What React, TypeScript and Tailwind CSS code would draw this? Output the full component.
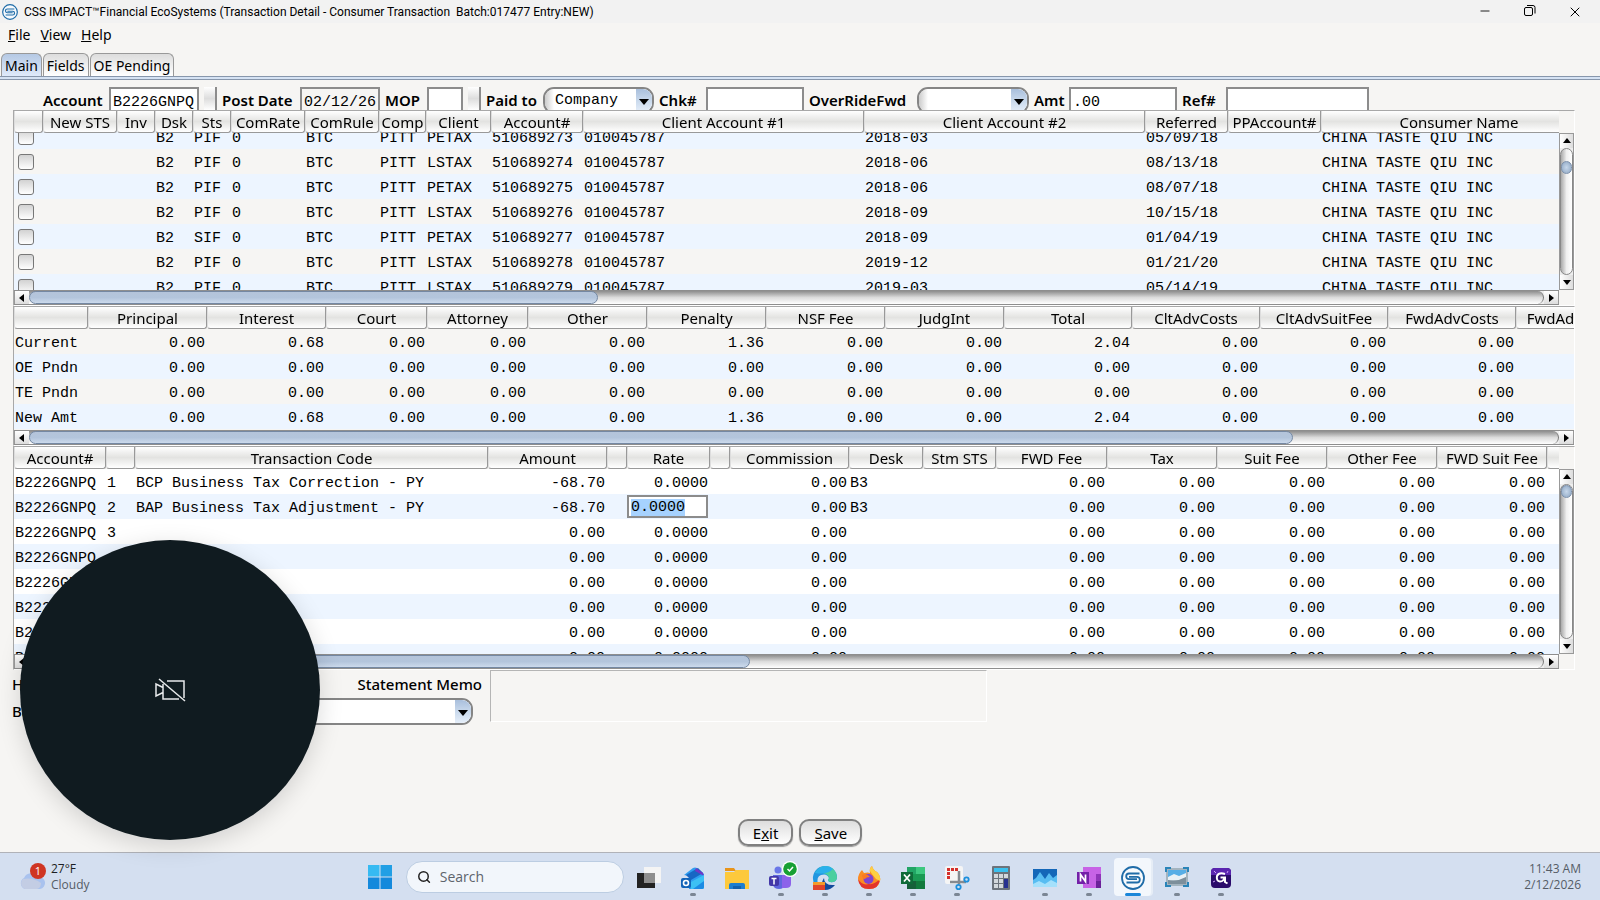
import React, { useEffect, useRef } from 'react'
import { Minus, Search, X } from 'lucide-react'

interface Column {
  name: string
  width: number
  align?: 'left' | 'right'
}

const accountColumns: Column[] = [
  { name: '', width: 29 },
  { name: 'New STS', width: 74 },
  { name: 'Inv', width: 38 },
  { name: 'Dsk', width: 38 },
  { name: 'Sts', width: 38 },
  { name: 'ComRate', width: 74 },
  { name: 'ComRule', width: 74 },
  { name: 'Comp', width: 47 },
  { name: 'Client', width: 65 },
  { name: 'Account#', width: 92 },
  { name: 'Client Account #1', width: 281 },
  { name: 'Client Account #2', width: 281 },
  { name: 'Referred', width: 83 },
  { name: 'PPAccount#', width: 93 },
  { name: 'Consumer Name', width: 276 },
]

const accounts = [
  { sts: 'PIF', client: 'PETAX', account: '510689273', period: '2018-03', referred: '05/09/18' },
  { sts: 'PIF', client: 'LSTAX', account: '510689274', period: '2018-06', referred: '08/13/18' },
  { sts: 'PIF', client: 'PETAX', account: '510689275', period: '2018-06', referred: '08/07/18' },
  { sts: 'PIF', client: 'LSTAX', account: '510689276', period: '2018-09', referred: '10/15/18' },
  { sts: 'SIF', client: 'PETAX', account: '510689277', period: '2018-09', referred: '01/04/19' },
  { sts: 'PIF', client: 'LSTAX', account: '510689278', period: '2019-12', referred: '01/21/20' },
  { sts: 'PIF', client: 'LSTAX', account: '510689279', period: '2019-03', referred: '05/14/19' },
]

const balanceColumns: Column[] = [
  { name: '', width: 74 },
  { name: 'Principal', width: 119, align: 'right' },
  { name: 'Interest', width: 119, align: 'right' },
  { name: 'Court', width: 101, align: 'right' },
  { name: 'Attorney', width: 101, align: 'right' },
  { name: 'Other', width: 119, align: 'right' },
  { name: 'Penalty', width: 119, align: 'right' },
  { name: 'NSF Fee', width: 119, align: 'right' },
  { name: 'JudgInt', width: 119, align: 'right' },
  { name: 'Total', width: 128, align: 'right' },
  { name: 'CltAdvCosts', width: 128, align: 'right' },
  { name: 'CltAdvSuitFee', width: 128, align: 'right' },
  { name: 'FwdAdvCosts', width: 128, align: 'right' },
  { name: 'FwdAdvSuitFee', width: 128, align: 'right' },
]

const zero = '0.00'
const dueAmounts = [zero, '0.68', zero, zero, zero, '1.36', zero, zero, '2.04', zero, zero, zero, zero]
const noAmounts = dueAmounts.map(() => zero)

const balances = [
  ['Current', ...dueAmounts],
  ['OE Pndn', ...noAmounts],
  ['TE Pndn', ...noAmounts],
  ['New Amt', ...dueAmounts],
]

const transactionColumns: Column[] = [
  { name: 'Account#', width: 92 },
  { name: '', width: 29 },
  { name: 'Transaction Code', width: 353 },
  { name: 'Amount', width: 119, align: 'right' },
  { name: '', width: 20 },
  { name: 'Rate', width: 83, align: 'right' },
  { name: '', width: 20 },
  { name: 'Commission', width: 119, align: 'right' },
  { name: 'Desk', width: 74 },
  { name: 'Stm STS', width: 73 },
  { name: 'FWD Fee', width: 111, align: 'right' },
  { name: 'Tax', width: 110, align: 'right' },
  { name: 'Suit Fee', width: 110, align: 'right' },
  { name: 'Other Fee', width: 110, align: 'right' },
  { name: 'FWD Suit Fee', width: 110, align: 'right' },
  { name: '', width: 110, align: 'right' },
]

const codes = ['BCP Business Tax Correction - PY', 'BAP Business Tax Adjustment - PY']

// Rate field that is being edited, its value selected on open
const RateEditor: React.FC = () => {
  const ref = useRef<HTMLInputElement>(null)
  useEffect(() => {
    ref.current?.focus({ preventScroll: true })
    ref.current?.select()
  }, [])
  return (
    <input
      ref={ref}
      aria-label="Rate"
      defaultValue="0.0000"
      className="block h-[23px] w-full border-2 border-[#8c8c8c] bg-white pt-[2px] pl-[2px] text-left outline-none selection:bg-[#a6d2ff] selection:text-black"
    />
  )
}

const accountRows: React.ReactNode[][] = accounts.map(a => [
  <input
    type="checkbox"
    aria-label={`Select ${a.account}`}
    className="ml-[3px] block size-4 appearance-none rounded-[3px] border border-[#777] bg-linear-to-b from-[#d2d2d2] to-white"
  />,
  '', '', 'B2', a.sts, '0', 'BTC', 'PITT', a.client, a.account, '010045787', a.period, a.referred, '', 'CHINA TASTE QIU INC',
])

const transactionRows: React.ReactNode[][] = Array.from({ length: 8 }, (_, i) => {
  const coded = i < codes.length
  return [
    'B2226GNPQ', String(i + 1), codes[i] ?? '', coded ? '-68.70' : zero, '',
    i === 1 ? <RateEditor /> : '0.0000',
    '', zero, coded ? 'B3' : '', '', zero, zero, zero, zero, zero, '',
  ]
})

const Arrow: React.FC<{ d: string }> = ({ d }) => (
  <svg viewBox="0 0 10 10" className="size-[10px]"><path d={d} fill="#000" /></svg>
)

const HScroll: React.FC<{ thumb: number }> = ({ thumb }) => (
  <div className="flex h-[15px] border-y border-[#8e8e8e] bg-[#eee]">
    <button aria-label="Scroll left" className="flex w-[15px] items-center justify-center border-l border-[#999] bg-linear-to-b from-white to-[#ddd]">
      <Arrow d="M7 1v8L2 5z" />
    </button>
    <div className="flex-1 rounded-r-full border-r border-[#777] bg-linear-to-b from-[#8d8d8d] via-[#dcdcdc] to-white">
      <div
        className="h-full rounded-full border border-[#7488a3] bg-linear-to-b from-[#b4c4da] via-[#b3c5dc] to-[#ccdaec]"
        style={{ width: `${thumb}%` }}
      />
    </div>
    <button aria-label="Scroll right" className="flex w-[15px] items-center justify-center border-r border-[#999] bg-linear-to-b from-white to-[#ddd]">
      <Arrow d="M3 1v8l5-4z" />
    </button>
  </div>
)

const VScroll: React.FC<{ start: number }> = ({ start }) => (
  <div className="flex w-[15px] flex-1 flex-col border border-[#999] bg-[#eee]">
    <button aria-label="Scroll up" className="flex h-[14px] items-center justify-center bg-linear-to-r from-white to-[#ddd]">
      <Arrow d="M1 7h8L5 2z" />
    </button>
    <div className="flex-1 rounded-full border border-[#888] bg-linear-to-r from-[#aaa] via-[#efefef] to-white">
      <div style={{ height: start }} />
      <div className="h-[13px] w-full rounded-full border border-[#7c90ab] bg-radial from-[#c6d7ea] to-[#8ea6c2]" />
    </div>
    <button aria-label="Scroll down" className="flex h-[14px] items-center justify-center bg-linear-to-r from-white to-[#ddd]">
      <Arrow d="M1 3h8L5 8z" />
    </button>
  </div>
)

interface GridProps {
  label: string
  columns: Column[]
  rows: React.ReactNode[][]
  height: string
  odd: string
  even: string
  thumb: number
  scrollTop?: number
  vStart?: number
}

const Grid: React.FC<GridProps> = ({ label, columns, rows, height, odd, even, thumb, scrollTop = 0, vStart }) => {
  const view = useRef<HTMLDivElement>(null)
  useEffect(() => {
    if (view.current) view.current.scrollTop = scrollTop
  }, [scrollTop])
  const total = columns.reduce((sum, c) => sum + c.width, 0)

  return (
    <section aria-label={label} className="mr-[25px] ml-[13px] flex border-t border-r border-b border-l border-t-[#a8a8a8] border-r-white border-b-white border-l-[#a8a8a8]">
      <div className="min-w-0 flex-1">
        <div ref={view} className={`overflow-hidden ${height}`}>
          <table className="table-fixed border-separate border-spacing-0" style={{ width: total }}>
            <colgroup>
              {columns.map((c, i) => <col key={i} style={{ width: c.width }} />)}
            </colgroup>
            <thead className="sticky top-0 z-10">
              <tr className="h-[22px]">
                {columns.map((c, i) => (
                  <th
                    key={i}
                    className="overflow-hidden rounded-b-[3px] border-r border-b border-l border-r-[#999] border-b-[#999] border-l-[#ddd] bg-linear-to-b from-white via-[#e3e3e1] to-white p-0 pt-[2px] font-['Noto_Sans',sans-serif] text-[15px] leading-[19px] font-normal whitespace-nowrap"
                  >
                    {c.name}
                  </th>
                ))}
              </tr>
            </thead>
            <tbody className="font-['Liberation_Mono',monospace] text-[15px] leading-[21px] whitespace-pre">
              {rows.map((row, r) => (
                <tr key={r} className={`h-[25px] ${r % 2 === 0 ? odd : even}`}>
                  {row.map((cell, i) => (
                    <td
                      key={i}
                      className={`${columns[i].align === 'right' ? 'pr-[2px] text-right' : 'pl-px'} ${typeof cell === 'string' ? 'pt-1' : ''}`}
                    >
                      {cell}
                    </td>
                  ))}
                </tr>
              ))}
            </tbody>
          </table>
        </div>
        <HScroll thumb={thumb} />
      </div>
      {vStart !== undefined && (
        <div className="flex flex-col pt-[22px] pb-[15px]">
          <VScroll start={vStart} />
        </div>
      )}
    </section>
  )
}

const fieldClass = "h-[27px] border-2 border-[#8c8c8c] pt-1 pl-[2px] font-['Liberation_Mono',monospace] text-[15px]"

const Combo: React.FC<{ id: string; width: string; value?: string }> = ({ id, width, value = '' }) => (
  <span className={`relative flex h-[27px] overflow-hidden rounded-[11px] border-2 border-[#858585] bg-white ${width}`}>
    <select
      id={id}
      defaultValue={value}
      className="h-full w-full appearance-none bg-linear-to-r from-[#ccc] via-white via-[9px] to-white pl-[10px] font-['Liberation_Mono',monospace] text-[15px] leading-[23px]"
    >
      <option value={value}>{value}</option>
    </select>
    <span className="pointer-events-none absolute inset-y-0 right-0 flex w-4 items-center justify-center bg-linear-to-b from-[#a9bfdc] via-[#c9d9ec] to-[#e6effa]">
      <Arrow d="M0 3h10L5 9z" />
    </span>
  </span>
)

const labelClass = 'shrink-0 text-[15px] font-semibold whitespace-nowrap'
const memoLabelClass = 'shrink-0 text-[15px] font-medium whitespace-nowrap'

const Mark: React.FC<{ className: string }> = ({ className }) => (
  <svg viewBox="0 0 24 24" className={className} fill="none" stroke="#1f6ca8">
    <circle cx="12" cy="12" r="11" fill="#f7fafd" strokeWidth="1.800" />
    <path d="M18.500 7.500H8a2.800 2.800 0 0 0 0 5.600h8" strokeWidth="1.800" />
    <path d="M5.500 16.500H16a2.800 2.800 0 0 0 0-5.600H8" strokeWidth="1.800" />
  </svg>
)

const apps: { name: string; running?: boolean; active?: boolean; icon: React.ReactNode }[] = [
  {
    name: 'Task view',
    icon: <>
      <path d="M7 1h17v16H7z" fill="#f4f4f4" /><path d="M0 7h18v15H0z" fill="#222" /><path d="M7 7h11v10H7z" fill="#8e8e8e" />
    </>,
  },
  {
    name: 'Outlook',
    running: true,
    icon: <>
      <path d="M3 9 12 2q2-1 4 0l7 6v13q0 2-2 2H8V10z" fill="#2f9df0" />
      <path d="m5 9 12-7 5 5-12 7z" fill="#1767c4" /><path d="m15 2 7 5 1 3-9-5z" fill="#7037c8" />
      <path d="m10 16 13-7v12q0 2-2 2H10z" fill="#3cc0f4" /><path d="m12 23 11-8v6q0 2-2 2z" fill="#1b8be4" />
      <rect y="12" width="10" height="10" rx="2" fill="#1263b8" /><circle cx="5" cy="17" r="2.500" fill="none" stroke="#fff" strokeWidth="1.600" />
    </>,
  },
  {
    name: 'File Explorer',
    icon: <>
      <path d="M0 2h9l2 3H0z" fill="#e8941a" /><path d="M0 6h9l2-2h13v19H0z" fill="#fdc93c" />
      <path d="M4 23v-4q0-2 2-2h12q2 0 2 2v4z" fill="#1c7ed0" /><path d="M8 20h8v3H8z" fill="#1261ad" />
    </>,
  },
  {
    name: 'Teams',
    running: true,
    icon: <>
      <circle cx="9" cy="4" r="3.500" fill="#6a78e8" /><circle cx="18" cy="6" r="3" fill="#7e63e0" />
      <path d="M4 9h11v10q0 4-5 4T4 19z" fill="#5f66de" /><path d="M13 9h9v9q0 4-5 4h-4z" fill="#8c62ea" />
      <rect y="10" width="10" height="10" rx="2" fill="#4338a8" /><path d="M2.500 12.500h5M5 12.500v6" stroke="#fff" strokeWidth="1.500" />
      <circle cx="21" cy="3" r="8" fill="#fff" /><circle cx="21" cy="3" r="6.800" fill="#17a034" />
      <path d="m18.500 3 2 2 3.500-4" fill="none" stroke="#fff" strokeWidth="1.500" />
    </>,
  },
  {
    name: 'Edge',
    running: true,
    icon: <>
      <path d="M0 13A12 12 0 0 1 24 11q0 6-7 5-3-1-1-4-2-5-8-3-5 2-3 9 0 3 4 5Q0 21 0 13" fill="#2196e0" />
      <path d="M2 7Q6 0 13 0q10 1 11 11 0 6-7 5-3-1-1-4-1-6-14-5" fill="#4bcf9e" />
      <path d="M2 7Q6 0 13 0q4 0 7 3-6 6-18 4" fill="#2ab0ec" />
      <path d="M11 12q0 8 11 7-4 5-10 5-6-5-1-12" fill="#124a9c" />
      <path d="M0 16h12v8H0z" fill="#e0442b" /><path d="M0 16h12v3H0z" fill="#f49b2b" />
    </>,
  },
  {
    name: 'Firefox',
    running: true,
    icon: <>
      <path d="M1 13q0-5 4-9l2 3q4-1 6 0-1-5 2-7 1 4 5 6 4 4 3 9-2 8-11 8T1 13" fill="#fb8b23" />
      <path d="M1 13q4 7 11 5 5 1 11-5-1 10-11 10T1 13" fill="#e3342c" />
      <path d="M15 0q1 4 5 6 4 4 3 9l-4-2Q14 7 13 5t2-5" fill="#fdd043" /><circle cx="11.500" cy="13" r="5" fill="#8044d0" />
      <path d="M5 9q5-2 8 2-4 0-5 2-3 0-3-4" fill="#fb7a22" />
    </>,
  },
  {
    name: 'Excel',
    running: true,
    icon: <>
      <path d="M6 1h18v22H6z" fill="#1a9a53" /><path d="M15 1h9v7h-9z" fill="#3dc87f" /><path d="M6 1h9v7H6z" fill="#22a565" />
      <path d="M15 15h9v8h-9z" fill="#127a3d" /><path d="M6 15h9v8H6z" fill="#17603a" /><rect y="6" width="12" height="12" fill="#0f6b39" />
      <path d="m3 8.500 6 7M9 8.500l-6 7" stroke="#fff" strokeWidth="1.800" />
    </>,
  },
  {
    name: 'Snipping Tool',
    running: true,
    icon: <>
      <rect width="18" height="18" rx="2" fill="#f5f5f5" /><path d="M13 3.500H3.500V13" fill="none" stroke="#d5302b" strokeWidth="3" strokeDasharray="3 1" />
      <path d="M14 5v13M5 16h16" stroke="#858a90" strokeWidth="2.500" />
      <circle cx="13.500" cy="21" r="2.200" fill="none" stroke="#1b8fdc" strokeWidth="1.800" /><circle cx="21.500" cy="13.500" r="2.200" fill="none" stroke="#1b8fdc" strokeWidth="1.800" />
    </>,
  },
  {
    name: 'Calculator',
    icon: <>
      <rect x="3" width="18" height="24" rx="1" fill="#6c737b" /><path d="M5 2h14v4H5z" fill="#3bc0ee" />
      <path d="M5 8h4v4H5zM10 8h4v4h-4zM15 8h4v4h-4zM5 13h4v4H5zM10 13h4v4h-4zM5 18h4v4H5zM10 18h4v4h-4z" fill="#d3d8dc" />
      <path d="M15 13h4v9h-4z" fill="#27308f" />
    </>,
  },
  {
    name: 'Monitor',
    running: true,
    icon: <>
      <path d="M0 3h24v18H0z" fill="#1467b8" /><path d="m0 14 3-2 4-6 5 7 4-6 4 5 4-3v12H0z" fill="#58bdf2" /><path d="m0 18 6-3 6 3 6-4 6 3v4H0z" fill="#a5e0fb" />
    </>,
  },
  {
    name: 'OneNote',
    running: true,
    icon: <>
      <path d="M6 1h18v21H6z" fill="#c763e6" /><path d="M19 8h5v7h-5z" fill="#8f35b8" /><path d="M19 15h5v7h-5z" fill="#6b2199" />
      <rect y="6" width="12" height="12" fill="#7320a8" /><path d="M3.500 15.500v-7l5 7v-7" fill="none" stroke="#fff" strokeWidth="1.700" />
    </>,
  },
  { name: 'CSS Impact', active: true, icon: null },
  {
    name: 'Remote Desktop',
    running: true,
    icon: <>
      <rect x="1" y="2" width="22" height="18" fill="#a4b4bf" /><path d="M3 4h18v7H3z" fill="#57aee6" /><path d="m3 11 6-3 5 2 7-3v5l-9 3-9-1z" fill="#e9f1f6" />
      <path d="M3 14q9 2 18-3v7H3z" fill="#7d8f9b" /><path d="M1 6V2h5M18 2h5v4M23 16v4h-5M6 20H1v-4" fill="none" stroke="#2a84b8" strokeWidth="2" />
    </>,
  },
  {
    name: 'G',
    running: true,
    icon: <>
      <rect x="2" y="2" width="20" height="20" rx="4" fill="#2a0b6b" /><path d="M2 9V6q0-4 4-4h12q4 0 4 4v3z" fill="#5a25b0" />
      <path d="M16 8q-6-2-8 2-1 5 3 5.500 4 0 4.500-4.500M11.500 11.500H16V16l2.500 1.500" fill="none" stroke="#fff" strokeWidth="2" />
      <path d="m5 5 2 2M19 5l-1 2M4 16l2-1" stroke="#c79bf5" />
    </>,
  },
]

const Taskbar: React.FC = () => (
  <footer className="grid h-12 grid-cols-[1fr_auto_1fr] items-center border-t border-[#b0b2b8] bg-[#d4dff0] font-['Open_Sans',sans-serif] text-[12px] leading-4">
    <div className="flex items-center gap-[3px] pl-[18px]">
      <svg viewBox="0 0 30 30" className="size-[30px]">
        <path d="M7 27a6 6 0 0 1-1-11 8 8 0 0 1 14-1 6 6 0 0 1 2 12z" fill="#a9c2ee" />
        <path d="M7 27a6 6 0 0 1-2-10q10-2 18 4 0 5-4 6z" fill="#c3cde4" />
        <circle cx="20" cy="9" r="8" fill="#cf3523" />
        <text x="20" y="13" textAnchor="middle" fontSize="11" fill="#fff">1</text>
      </svg>
      <div className="text-[#1c1f24]">
        <div>27°F</div>
        <div className="text-[#555c66]">Cloudy</div>
      </div>
    </div>

    <div className="flex items-center">
      <button aria-label="Start" className="flex size-11 items-center justify-center">
        <svg viewBox="0 0 24 24" className="size-6">
          <path d="M0 0h11.500v11.500H0z" fill="#36baf2" /><path d="M12.500 0H24v11.500H12.500z" fill="#219fe5" />
          <path d="M0 12.500h11.500V24H0zM12.500 12.500H24V24H12.500z" fill="#1489dc" />
        </svg>
      </button>
      <label className="mr-[3px] ml-1 flex h-8 w-[218px] items-center gap-[9px] rounded-full border border-[#bccde2] bg-[#f2f6fb] pl-[10px]">
        <Search className="size-4 text-[#222]" strokeWidth={2.5} />
        <input aria-label="Search" placeholder="Search" className="w-full bg-transparent text-[14px] outline-none placeholder:text-[#5e646c]" />
      </label>
      {apps.map(app => (
        <button
          key={app.name}
          aria-label={app.name}
          className="flex h-[38px] w-11 justify-center"
        >
          <span className={`flex h-[38px] w-[37px] flex-col items-center justify-end gap-[3px] rounded-sm ${app.active ? 'bg-[#f3f7fc] shadow-[2px_0_0_#e6edf6]' : ''}`}>
            {app.active ? <Mark className="size-6" /> : <svg viewBox="0 0 24 24" className="size-6 overflow-visible">{app.icon}</svg>}
            <span className={`h-[3px] rounded-full ${app.active ? 'w-4 bg-[#1a86d9]' : app.running ? 'w-[6px] bg-[#7b8694]' : 'w-[6px]'}`} />
          </span>
        </button>
      ))}
    </div>

    <div className="pr-[19px] text-right text-[#555c66]">
      <div>11:43 AM</div>
      <div>2/12/2026</div>
    </div>
  </footer>
)

const tabClass = 'h-[23px] rounded-t-[6px] border border-b-0 border-[#999] px-[3px] text-[14px] leading-[21px]'
const pillClass = 'h-[27px] rounded-[10px] border-2 border-[#808080] bg-linear-to-b from-[#ddd] via-[#eee] to-white px-[13px] text-[15px] leading-[22px] shadow-[0_1px_1px_#999]'

const App: React.FC = () => {
  return (
    <div className="relative flex min-h-screen flex-col overflow-hidden bg-[#f6f5f3] font-['Noto_Sans',sans-serif] text-black">
      {/* Title bar */}
      <header className="flex h-[23px] items-center bg-[#f2f2f2] pr-[3px] pl-[2px] font-['Roboto',sans-serif] text-[12px]">
        <Mark className="size-4" />
        <h1 className="ml-[6px] whitespace-pre">CSS IMPACT™Financial EcoSystems (Transaction Detail - Consumer Transaction  Batch:017477 Entry:NEW)</h1>
        <div className="ml-auto flex">
          <button aria-label="Minimize" className="flex w-[45px] justify-center"><Minus className="size-[14px]" strokeWidth={1.5} /></button>
          <button aria-label="Restore" className="flex w-[45px] justify-center">
            <svg viewBox="0 0 14 14" className="size-[14px]" fill="none" stroke="#000">
              <rect x="1.500" y="3.500" width="8" height="8" rx="1.500" /><path d="M4 1.500h6a2 2 0 0 1 2 2v6" />
            </svg>
          </button>
          <button aria-label="Close" className="flex w-[45px] justify-center"><X className="size-4" strokeWidth={1.5} /></button>
        </div>
      </header>

      {/* Menu */}
      <nav className="flex h-[30px] gap-[10px] pl-2 text-[14px] leading-6">
        <button className="self-start"><u>F</u>ile</button>
        <button className="self-start"><u>V</u>iew</button>
        <button className="self-start"><u>H</u>elp</button>
      </nav>

      <div role="tablist" className="flex gap-px pl-px">
        <button role="tab" aria-selected="true" className={`${tabClass} bg-linear-to-b from-[#b5c9e4] to-[#dfeafa]`}>Main</button>
        <button role="tab" aria-selected="false" className={`${tabClass} bg-linear-to-b from-[#ddd] to-white`}>Fields</button>
        <button role="tab" aria-selected="false" className={`${tabClass} bg-linear-to-b from-[#ddd] to-white`}>OE Pending</button>
      </div>
      <div className="h-1 border-y border-[#8796ab] bg-[#d5e2f3]" />

      <main className="flex flex-1 flex-col">
        {/* Payment header, its lower edge runs under the grid */}
        <form className="flex h-[30px] gap-[5px] overflow-hidden pt-[7px] pl-[43px] leading-[27px]">
          <label htmlFor="account" className={`${labelClass} w-[61px]`}>Account</label>
          <input id="account" defaultValue="B2226GNPQ" className={`${fieldClass} w-[90px] bg-white`} />
          <span className="w-[13px] border-r-2 border-[#8c8c8c] bg-linear-to-b from-white via-[#ddd] to-white" />
          <label htmlFor="post" className={`${labelClass} w-[73px]`}>Post Date</label>
          <input id="post" defaultValue="02/12/26" className={`${fieldClass} w-[80px]`} />
          <label htmlFor="mop" className={`${labelClass} w-[37px]`}>MOP</label>
          <input id="mop" className={`${fieldClass} w-9 bg-white`} />
          <span className="w-[13px] border-r-2 border-[#8c8c8c] bg-linear-to-b from-white via-[#ddd] to-white" />
          <label htmlFor="paid" className={`${labelClass} w-[52px]`}>Paid to</label>
          <Combo id="paid" width="w-[111px]" value="Company" />
          <label htmlFor="chk" className={`${labelClass} w-[42px]`}>Chk#</label>
          <input id="chk" className={`${fieldClass} w-[98px] bg-white`} />
          <label htmlFor="fwd" className={`${labelClass} w-[103px]`}>OverRideFwd</label>
          <Combo id="fwd" width="w-[112px]" />
          <label htmlFor="amt" className={`${labelClass} w-[30px]`}>Amt</label>
          <input id="amt" defaultValue=".00" className={`${fieldClass} w-[108px] bg-white`} />
          <label htmlFor="ref" className={`${labelClass} w-[39px]`}>Ref#</label>
          <input id="ref" className={`${fieldClass} w-[143px] bg-white`} />
        </form>

        <Grid
          label="Accounts" columns={accountColumns} rows={accountRows}
          height="h-[179px]" odd="bg-[#edf5ff]" even="bg-[#f6f5f3]"
          thumb={37.6} scrollTop={9} vStart={12}
        />
        <Grid
          label="Balances" columns={balanceColumns} rows={balances}
          height="h-[123px]" odd="bg-[#f6f5f3]" even="bg-[#edf5ff]"
          thumb={82.7}
        />
        <Grid
          label="Transactions" columns={transactionColumns} rows={transactionRows}
          height="h-[207px]" odd="bg-white" even="bg-[#edf5ff]"
          thumb={47.6} vStart={0}
        />

        <div className="flex gap-2 pl-3">
          <div className="w-[470px]">
            <div className="flex h-7 items-center justify-between">
              <span className={memoLabelClass}>History</span>
              <label htmlFor="memo" className={memoLabelClass}>Statement Memo</label>
            </div>
            <div className="flex items-center justify-between pr-[9px]">
              <label htmlFor="batch" className={memoLabelClass}>Batch</label>
              <Combo id="batch" width="w-[360px]" />
            </div>
          </div>
          <textarea id="memo" className="h-[52px] w-[497px] resize-none border border-t-[#b5b5b5] border-r-white border-b-white border-l-[#b5b5b5]" />
        </div>

        <div className="mt-auto flex justify-center gap-[6px] pb-[6px]">
          <button className={pillClass}>E<u>x</u>it</button>
          <button className={pillClass}><u>S</u>ave</button>
        </div>
      </main>

      <Taskbar />

      {/* Floating camera bubble */}
      <div className="absolute bottom-[60px] left-5 z-20 flex size-[300px] items-center justify-center rounded-full bg-[#101b20] shadow-[0_6px_24px_rgba(0,0,0,0.15)]">
        <svg viewBox="0 0 32 24" className="h-6 w-8" fill="none" stroke="#e8eaeb" strokeWidth="1.500">
          <path d="M13 3h17v17M25 21H9V6M9 9.500 2 6v12l7-3.500M5 1l26 22" />
        </svg>
      </div>
    </div>
  )
}

export default App
